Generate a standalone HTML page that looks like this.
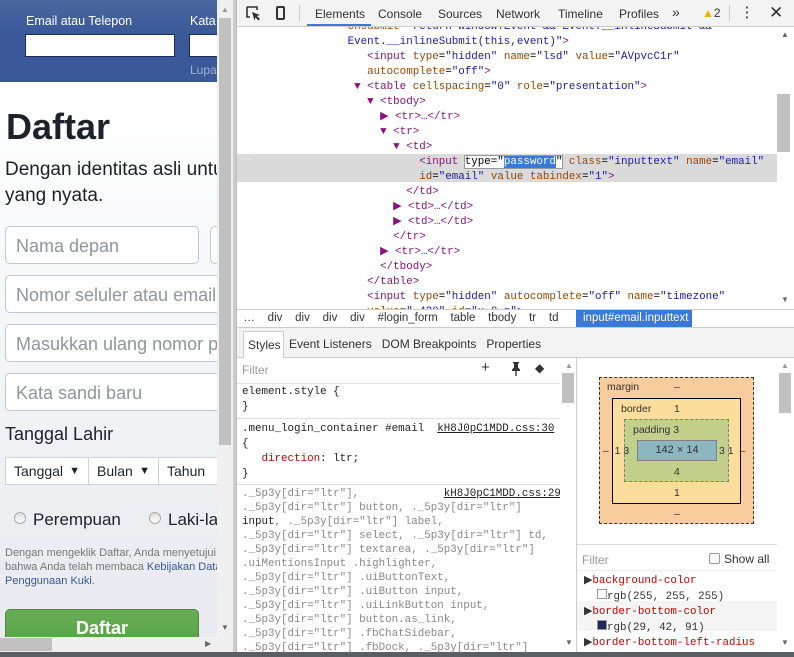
<!DOCTYPE html>
<html><head><meta charset="utf-8"><style>
*{margin:0;padding:0;box-sizing:border-box}
body{width:794px;height:657px;overflow:hidden;position:relative;background:#fff;font-family:"Liberation Sans",sans-serif}
.a{position:absolute}
.m{font-family:"Liberation Mono",monospace;font-size:10.85px;white-space:pre;line-height:15px}
.tg{color:#881280}.at{color:#994500}.av{color:#1a1aa6}.br{color:#a5a5a5}
.inp{position:absolute;left:5px;width:250px;height:38px;border:1px solid #bdc7d8;border-radius:5px;background:#fff;font-size:18px;color:#90949c;padding:9px 10px;white-space:nowrap;overflow:hidden}
.sel{position:absolute;top:457px;height:28px;background:#fff;border:1px solid #ccd0db;font-size:14px;color:#1d2129;padding:5px 8px}
.s{color:#222}.g{color:#888}
</style></head><body>
<!-- left page -->
<div class="a" style="left:0;top:0;width:217px;height:657px;background:linear-gradient(#fff 90px,#e9ebf0 600px);overflow:hidden">
 <div class="a" style="left:0;top:0;width:217px;height:82px;background:linear-gradient(#4b67a1,#3b5998 40%)"></div>
 <div class="a" style="left:26px;top:14px;color:#fff;font-size:12.5px">Email atau Telepon</div>
 <div class="a" style="left:190px;top:14px;color:#fff;font-size:12.5px">Kata</div>
 <div class="a" style="left:25px;top:34px;width:150px;height:23px;background:#fff;border:1px solid #1d2a5b"></div>
 <div class="a" style="left:189px;top:34px;width:40px;height:23px;background:#fff;border:1px solid #1d2a5b"></div>
 <div class="a" style="left:190px;top:63px;color:#9cb4d8;font-size:12px">Lupa</div>
 <div class="a" style="left:6px;top:106px;font-size:36px;font-weight:bold;color:#1d2129">Daftar</div>
 <div class="a" style="left:5px;top:157px;width:260px;font-size:19px;line-height:26px;color:#1d2129">Dengan identitas asli untuk yang nyata.</div>
 <div class="inp" style="top:226px;width:194px">Nama depan</div>
 <div class="inp" style="top:226px;left:210px;width:40px"></div>
 <div class="inp" style="top:275px">Nomor seluler atau email</div>
 <div class="inp" style="top:324px">Masukkan ulang nomor p</div>
 <div class="inp" style="top:373px">Kata sandi baru</div>
 <div class="a" style="left:5px;top:424px;font-size:18px;color:#1d2129">Tanggal Lahir</div>
 <div class="sel" style="left:5px;width:84px">Tanggal <span style="float:right;font-size:11px;margin-top:2px">▼</span></div>
 <div class="sel" style="left:88px;width:71px">Bulan <span style="float:right;font-size:11px;margin-top:2px">▼</span></div>
 <div class="sel" style="left:158px;width:70px">Tahun</div>
 <div class="a" style="left:14px;top:512px;width:12px;height:12px;border-radius:50%;border:1px solid #aaa;background:linear-gradient(#ddd,#fff)"></div>
 <div class="a" style="left:33px;top:510px;font-size:17px;color:#1d2129;white-space:nowrap">Perempuan</div>
 <div class="a" style="left:149px;top:512px;width:12px;height:12px;border-radius:50%;border:1px solid #aaa;background:linear-gradient(#ddd,#fff)"></div>
 <div class="a" style="left:168px;top:510px;font-size:17px;color:#1d2129;white-space:nowrap">Laki-laki</div>
 <div class="a" style="left:5px;top:546px;width:300px;font-size:11px;line-height:14px;color:#777;white-space:nowrap">Dengan mengeklik Daftar, Anda menyetujui<br>bahwa Anda telah membaca <span style="color:#365899">Kebijakan Data</span><br><span style="color:#365899">Penggunaan Kuki</span>.</div>
 <div class="a" style="left:5px;top:609px;width:194px;height:40px;border-radius:5px;background:linear-gradient(#67ae55,#58a046);border:1px solid #4a8a3a;color:#fff;font-weight:bold;font-size:18px;text-align:center;padding-top:8px">Daftar</div>
</div>
<!-- page scrollbars -->
<div class="a" style="left:217px;top:0;width:16px;height:637px;background:#f0f0f0"></div>
<div class="a" style="left:219px;top:18px;width:12px;height:427px;background:#c1c1c1"></div>
<div class="a" style="left:221px;top:5px;color:#999;font-size:8px">▲</div>
<div class="a" style="left:221px;top:623px;color:#666;font-size:8px">▼</div>
<div class="a" style="left:0;top:637px;width:233px;height:15px;background:#f0f0f0"></div>
<div class="a" style="left:0;top:638px;width:52px;height:13px;background:#c1c1c1"></div>
<div class="a" style="left:205px;top:639px;color:#666;font-size:8px">▶</div>
<div class="a" style="left:0;top:652px;width:794px;height:5px;background:#5a5f66"></div>
<!-- devtools -->
<div class="a" style="left:233px;top:0;width:3px;height:652px;background:#ccc"></div>
<div class="a" style="left:236px;top:0;width:558px;height:652px;background:#fff;border-left:1px solid #bbb">
 <div class="a" style="left:0;top:0;width:558px;height:27px;background:#f3f3f3;border-bottom:1px solid #ccc"></div>
 <svg class="a" style="left:9px;top:6px" width="16" height="16"><path d="M1 1h10v3M1 1v10h3" stroke="#333" stroke-width="1.6" fill="none"/><path d="M6 6l8 3-3 1 3 3-1.5 1.5-3-3-1 3z" fill="#333"/></svg>
 <div class="a" style="left:39px;top:6px;width:9px;height:14px;border:2px solid #333;border-radius:2px"></div>
 <div class="a" style="left:62px;top:5px;width:1px;height:16px;background:#ccc"></div>
 <div class="a" style="left:78px;top:7px;font-size:12px;color:#333">Elements</div>
 <div class="a" style="left:70px;top:24px;width:64px;height:2px;background:#3879d9"></div>
 <div class="a" style="left:141px;top:7px;font-size:12px;color:#333">Console</div>
 <div class="a" style="left:201px;top:7px;font-size:12px;color:#333">Sources</div>
 <div class="a" style="left:259px;top:7px;font-size:12px;color:#333">Network</div>
 <div class="a" style="left:321px;top:7px;font-size:12px;color:#333">Timeline</div>
 <div class="a" style="left:382px;top:7px;font-size:12px;color:#333">Profiles</div>
 <div class="a" style="left:435px;top:4px;font-size:14px;color:#333">»</div>
 <div class="a" style="left:465px;top:6px;font-size:12px;color:#333"><span style="color:#f2b200">▲</span>2</div>
 <div class="a" style="left:492px;top:5px;width:1px;height:16px;background:#ccc"></div>
 <div class="a" style="left:508px;top:5px;font-size:14px;font-weight:bold;color:#555;line-height:5px">·<br>·<br>·</div>
 <div class="a" style="left:532px;top:3px;font-size:17px;color:#333">✕</div>
 <!-- elements tree -->
 <div class="a" style="left:0;top:154px;width:540px;height:28px;background:#dadada"></div>
 <div class="a" style="left:4px;top:154px;color:#fff;font-size:10px">···</div>
 <div class="a" style="left:0;top:27px;width:540px;height:282px;overflow:hidden">
 <div class="a m" style="left:0;top:-7px;line-height:15px"><span class="at">                 onsubmit</span>=<span class="av">"return window.Event &amp;&amp; Event.__inlineSubmit &amp;&amp;</span>
<span class="av">                 Event.__inlineSubmit(this,event)"</span><span class="tg">&gt;</span>
<span class="tg">                    &lt;input </span><span class="at">type</span>=<span class="av">"hidden"</span> <span class="at">name</span>=<span class="av">"lsd"</span> <span class="at">value</span>=<span class="av">"AVpvcC1r"</span>
<span class="at">                    autocomplete</span>=<span class="av">"off"</span><span class="tg">&gt;</span>
<span class="tg">                  ▼ &lt;table </span><span class="at">cellspacing</span>=<span class="av">"0"</span> <span class="at">role</span>=<span class="av">"presentation"</span><span class="tg">&gt;</span>
<span class="tg">                    ▼ &lt;tbody&gt;</span>
<span class="tg">                      ▶ &lt;tr&gt;…&lt;/tr&gt;</span>
<span class="tg">                      ▼ &lt;tr&gt;</span>
<span class="tg">                        ▼ &lt;td&gt;</span>
<span class="tg">                            &lt;input </span><span style="background:#fff;outline:1px solid #999">type="<span style="background:#3879d9;color:#fff">password</span>"</span> <span class="at">class</span>=<span class="av">"inputtext"</span> <span class="at">name</span>=<span class="av">"email"</span>
<span class="at">                            id</span>=<span class="av">"email"</span> <span class="at">value tabindex</span>=<span class="av">"1"</span><span class="tg">&gt;</span>
<span class="tg">                          &lt;/td&gt;</span>
<span class="tg">                        ▶ &lt;td&gt;…&lt;/td&gt;</span>
<span class="tg">                        ▶ &lt;td&gt;…&lt;/td&gt;</span>
<span class="tg">                        &lt;/tr&gt;</span>
<span class="tg">                      ▶ &lt;tr&gt;…&lt;/tr&gt;</span>
<span class="tg">                      &lt;/tbody&gt;</span>
<span class="tg">                    &lt;/table&gt;</span>
<span class="tg">                    &lt;input </span><span class="at">type</span>=<span class="av">"hidden"</span> <span class="at">autocomplete</span>=<span class="av">"off"</span> <span class="at">name</span>=<span class="av">"timezone"</span>
<span class="at">                    value</span>=<span class="av">"-420"</span> <span class="at">id</span>=<span class="av">"u_0_n"</span><span class="tg">&gt;</span></div>
 </div>
 <div class="a" style="left:540px;top:27px;width:17px;height:282px;background:#fff"></div>
 <div class="a" style="left:540px;top:94px;width:13px;height:58px;background:#c1c1c1"></div>
 <div class="a" style="left:0;top:309px;width:558px;height:19px;background:#fff;border-top:1px solid #ccc;border-bottom:1px solid #ccc;font-size:11.5px;color:#333;padding-top:2px;white-space:pre">  …    div    div    div    div    #login_form    table    tbody    tr    td   </div>
 <div class="a" style="left:339px;top:310px;width:116px;height:17px;background:#3879d9;color:#fff;font-size:11.5px;padding:2px 7px">input#email.inputtext</div>
 <!-- styles tabs -->
 <div class="a" style="left:0;top:328px;width:558px;height:30px;background:#f3f3f3;border-bottom:1px solid #ccc"></div>
 <div class="a" style="left:6px;top:331px;width:41px;height:27px;background:#fff;border:1px solid #ccc;border-bottom:none;font-size:12px;color:#333;padding:6px 4px">Styles</div>
 <div class="a" style="left:52px;top:337px;font-size:12px;color:#333;white-space:pre">Event Listeners   DOM Breakpoints   Properties</div>
 <div class="a" style="left:5px;top:363px;font-size:12px;color:#999">Filter</div>
 <div class="a" style="left:244px;top:359px;font-size:15px;color:#333">+</div>
 <svg class="a" style="left:273px;top:362px" width="12" height="14"><path d="M3 0h6v1.5H8v4l2 2v1.5H2V7.5l2-2v-4H3z" fill="#333"/><rect x="5.3" y="9" width="1.4" height="5" fill="#333"/></svg>
 <div class="a" style="left:298px;top:361px;font-size:12px;color:#333">◆</div>
 <div class="a" style="left:0;top:383px;width:323px;height:1px;background:#e0e0e0"></div>
 <div class="a m" style="left:5px;top:385px;line-height:15px"><span class="s">element.style {</span>
<span class="s">}</span></div>
 <div class="a" style="left:0;top:418px;width:323px;height:1px;background:#e0e0e0"></div>
 <div class="a m" style="left:5px;top:422px;line-height:15px"><span class="s">.menu_login_container #email  <u>kH8J0pC1MDD.css:30</u></span>
<span class="s">{</span>
<span class="s">   <span style="color:#c80000">direction</span>: ltr;</span>
<span class="s">}</span></div>
 <div class="a" style="left:0;top:484px;width:323px;height:1px;background:#e0e0e0"></div>
 <div class="a m" style="left:5px;top:487px;line-height:14px"><span class="g">._5p3y[dir="ltr"],             <u class="s">kH8J0pC1MDD.css:29</u></span>
<span class="g">._5p3y[dir="ltr"] button, ._5p3y[dir="ltr"]</span>
<span class="s">input</span><span class="g">, ._5p3y[dir="ltr"] label,</span>
<span class="g">._5p3y[dir="ltr"] select, ._5p3y[dir="ltr"] td,</span>
<span class="g">._5p3y[dir="ltr"] textarea, ._5p3y[dir="ltr"]</span>
<span class="g">.uiMentionsInput .highlighter,</span>
<span class="g">._5p3y[dir="ltr"] .uiButtonText,</span>
<span class="g">._5p3y[dir="ltr"] .uiButton input,</span>
<span class="g">._5p3y[dir="ltr"] .uiLinkButton input,</span>
<span class="g">._5p3y[dir="ltr"] button.as_link,</span>
<span class="g">._5p3y[dir="ltr"] .fbChatSidebar,</span>
<span class="g">._5p3y[dir="ltr"] .fbDock, ._5p3y[dir="ltr"]</span></div>
 <div class="a" style="left:323px;top:358px;width:16px;height:294px;background:#fff"></div>
 <div class="a" style="left:325px;top:373px;width:12px;height:30px;background:#c1c1c1"></div>
 <div class="a" style="left:339px;top:358px;width:1px;height:294px;background:#ccc"></div>
 <!-- box model -->
 <div class="a" style="left:362px;top:377px;width:155px;height:147px;background:#f9cc9d;border:1px dashed #333"></div>
 <div class="a" style="left:375px;top:398px;width:129px;height:106px;background:#fddd9b;border:1px solid #000"></div>
 <div class="a" style="left:387px;top:419px;width:105px;height:63px;background:#c3d08b;border:1px dashed #808080"></div>
 <div class="a" style="left:400px;top:440px;width:80px;height:21px;background:#8cb6c0;border:1px solid #808080;font-size:11px;text-align:center;padding-top:3px;color:#333">142 × 14</div>
 <div class="a" style="font-size:10.5px;color:#333;left:370px;top:381px">margin</div>
 <div class="a" style="font-size:10.5px;color:#333;left:437px;top:381px">–</div>
 <div class="a" style="font-size:10.5px;color:#333;left:384px;top:403px">border</div>
 <div class="a" style="font-size:10.5px;color:#333;left:437px;top:403px">1</div>
 <div class="a" style="font-size:10.5px;color:#333;left:396px;top:424px">padding 3</div>
 <div class="a" style="font-size:10.5px;color:#333;left:437px;top:466px">4</div>
 <div class="a" style="font-size:10.5px;color:#333;left:437px;top:487px">1</div>
 <div class="a" style="font-size:10.5px;color:#333;left:437px;top:508px">–</div>
 <div class="a" style="font-size:10.5px;color:#333;left:366px;top:445px;white-space:pre">–  1 3</div>
 <div class="a" style="font-size:10.5px;color:#333;left:482px;top:445px;white-space:pre">3 1  –</div>
 <div class="a" style="left:340px;top:544px;width:200px;height:1px;background:#ddd"></div>
 <div class="a" style="left:345px;top:553px;font-size:12px;color:#999">Filter</div>
 <div class="a" style="left:472px;top:553px;width:11px;height:11px;border:1px solid #999;border-radius:2px"></div>
 <div class="a" style="left:487px;top:552px;font-size:12px;color:#333">Show all</div>
 <div class="a" style="left:340px;top:570px;width:200px;height:1px;background:#eee"></div>
 <div class="a" style="left:340px;top:601px;width:200px;height:30px;background:#f5f5f5"></div>
 <div class="a m" style="left:347px;top:574px;line-height:15px;color:#333">▶<span style="color:#c80000">background-color</span>
  <span style="display:inline-block;width:10px;height:10px;border:1px solid #999;background:#fff"></span>rgb(255, 255, 255)
▶<span style="color:#c80000">border-bottom-color</span>
  <span style="display:inline-block;width:10px;height:10px;border:1px solid #999;background:#1d2a5b"></span>rgb(29, 42, 91)
▶<span style="color:#c80000">border-bottom-left-radius</span></div>
 <div class="a" style="left:540px;top:358px;width:17px;height:294px;background:#fff"></div>
 <div class="a" style="left:542px;top:373px;width:12px;height:40px;background:#c1c1c1"></div>
 <div class="a" style="left:544px;top:361px;color:#999;font-size:8px">▲</div>
 <div class="a" style="left:544px;top:638px;color:#666;font-size:8px">▼</div>
 <div class="a" style="left:328px;top:361px;color:#999;font-size:8px">▲</div>
 <div class="a" style="left:328px;top:638px;color:#666;font-size:8px">▼</div>
 <div class="a" style="left:544px;top:30px;color:#666;font-size:8px">▲</div>
 <div class="a" style="left:544px;top:295px;color:#666;font-size:8px">▼</div>
</div>
</body></html>
